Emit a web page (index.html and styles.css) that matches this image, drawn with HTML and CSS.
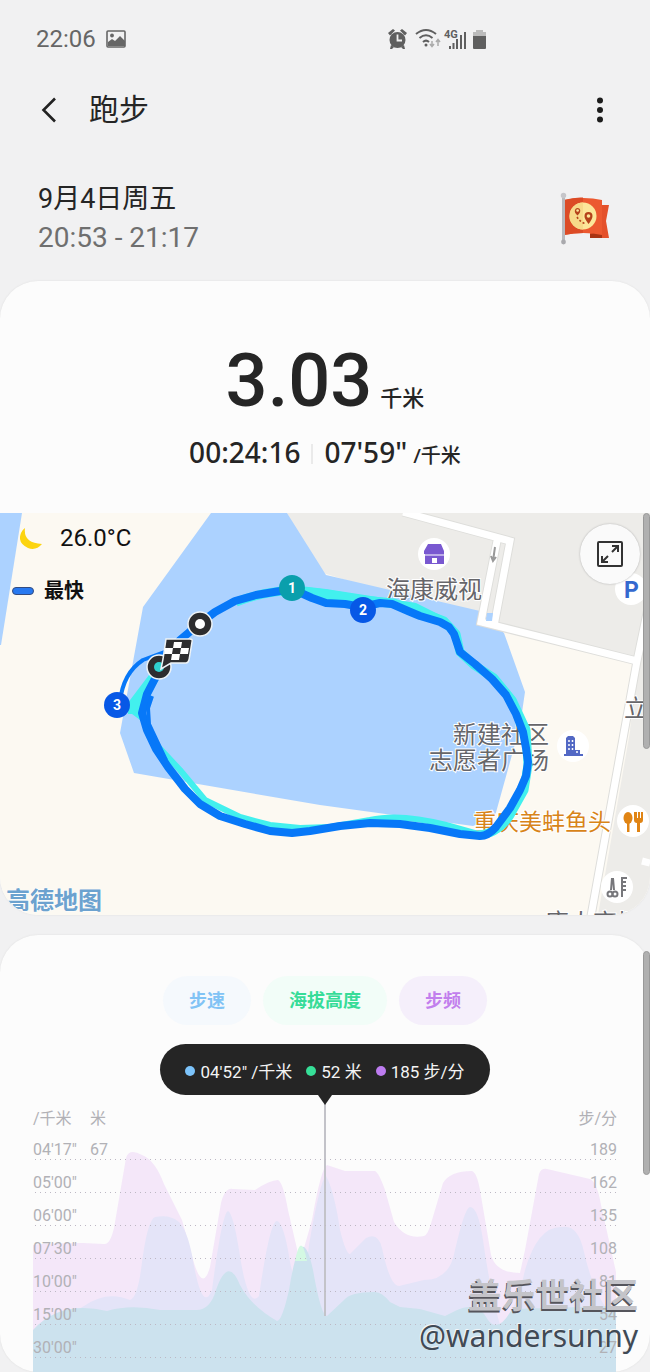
FILE: index.html
```html
<!DOCTYPE html>
<html lang="zh-CN">
<head>
<meta charset="utf-8">
<meta name="viewport" content="width=device-width, initial-scale=1">
<title>跑步</title>
<link rel="stylesheet" href="styles.css">
</head>
<body>
<div class="page">
  <div class="status">
    <div class="status-left">
      <span>22:06</span>
      <svg width="20" height="18" viewBox="0 0 20 18"><rect x="1" y="1" width="18" height="16" rx="1" fill="none" stroke="#666" stroke-width="1.6"/><circle cx="6" cy="5.500" r="1.900" fill="#666"/><path d="M2 16v-4l4-3 3 2 5-5 5 5v5z" fill="#666"/></svg>
    </div>
    <svg class="status-right" width="100" height="22" viewBox="0 0 100 22">
      <g fill="#5f5f5f"><circle cx="9.500" cy="12" r="8"/><path d="M0 5l5-4 2 1.500-5 5zM19 5l-5-4-2 1.500 5 5zM3 17l3 2-2 2H2zM16 17l-3 2 2 2h2z"/></g>
      <path d="M9.500 6.500v6h4.500" fill="none" stroke="#f1f1f1" stroke-width="1.800"/>
      <g fill="none" stroke="#5f5f5f" stroke-width="2"><path d="M28 6q10-8 20 0M31.500 10q6.500-5.500 13 0M35 14q3-2.800 6 0"/></g>
      <circle cx="38" cy="17" r="1.500" fill="#5f5f5f"/>
      <path d="M44 13v5m-2-2l2 2.500 2-2.500M50 18v-6m-2 2l2-2.500 2 2.500" fill="none" stroke="#aaa" stroke-width="1.500"/>
      <text class="status-net" x="56" y="10">4G</text>
      <path d="M62 18v3M65.500 15v6M69 11v10M73 7v14M77 4v17" stroke="#5f5f5f" stroke-width="2"/>
      <path d="M85 8V4h3V2h7v2h3v4z" fill="#bbb"/><path d="M85 8h13v12q0 1-1 1H86q-1 0-1-1z" fill="#5f5f5f"/>
    </svg>
  </div>

  <header class="bar">
    <button class="icon-btn" aria-label="返回"><svg width="16" height="26" viewBox="0 0 16 26"><path d="M14 1.500L2.500 13 14 24.500" fill="none" stroke="#222" stroke-width="2.600"/></svg></button>
    <h1>跑步</h1>
    <button class="icon-btn more" aria-label="更多选项"><svg width="8" height="26" viewBox="0 0 8 26" fill="#1c1c1c"><circle cx="4" cy="3.500" r="3"/><circle cx="4" cy="13" r="3"/><circle cx="4" cy="22.500" r="3"/></svg></button>
  </header>

  <section class="when">
    <div>
      <p class="date">9月4日周五</p>
      <p class="time">20:53 - 21:17</p>
    </div>
    <svg width="50" height="54" viewBox="0 0 50 54">
      <path d="M38 13h11l-3 16 3 17H30V38h8z" fill="#e4512b"/><path d="M30 42l12-3v7H30z" fill="#a93414"/>
      <path d="M4 8q20-4 38 0v35q-18-4-38 0z" fill="#ec5930"/><path d="M4 8q10-3 19-2.500v35.500Q14 41 4 43z" fill="#dc4b26"/>
      <circle cx="23" cy="24" r="13.500" fill="#fce69a"/><path d="M23 10.500a13.500 13.500 0 0 0 0 27z" fill="#f7d98a"/>
      <path d="M28.500 32q-4.500-6-4-8a4 4 0 0 1 8 0q0 3-4 8zM17.500 23.500q-3.500-3-2.500-5.500a2.700 2.700 0 0 1 5.200 0q.5 2.500-2.700 5.500z" fill="#b5421b"/>
      <circle cx="28.500" cy="24" r="1.800" fill="#fce69a"/><circle cx="17.600" cy="18.500" r="1.300" fill="#fce69a"/>
      <path d="M17 25q3 5 9 7" fill="none" stroke="#b5421b" stroke-width="1.500" stroke-dasharray="2 2"/>
      <path d="M3.500 3v48" stroke="#b9b9bd" stroke-width="3"/><circle cx="3.500" cy="3.500" r="2.700" fill="#c6c6ca"/><circle cx="3.500" cy="50" r="2.400" fill="#a9a9ad"/>
    </svg>
  </section>

  <section class="card">
    <div class="summary">
      <p class="distance"><span class="lcd">3.03</span><span class="unit">千米</span></p>
      <p class="pace"><span>00:24:16</span><i class="rule"></i><span>07'59"</span><span class="unit-small">/千米</span></p>
    </div>
    <div class="map">
      <svg class="map-canvas" viewBox="0 513 650 402">
        <rect y="513" width="650" height="402" fill="#fcf9f2"/>
        <path d="M0 513h22L1 645H0z" fill="#acd2ff"/>
        <path d="M287 513h363v148l-13 0-157-39-160-50z" fill="#edece9"/>
        <path d="M632 720h18v195h-52z" fill="#edece9"/>
        <path d="M650 600v130h-20l8-68z" fill="#edece9"/>
        <path d="M211 513h76l39 62 154 36 24 22 21 59-5 34-25 90-22 10-153-21-186-32-14-40 23-126z" fill="#acd2ff"/>
        <g fill="none" stroke="#dededb" stroke-width="9"><path d="M403 512l107 29-16 85M497 541l-16 81 156 39M651 594l-14 67-46 255"/></g>
        <g fill="none" stroke="#fff" stroke-width="7"><path d="M403 512l107 29-16 85M497 541l-16 81 156 39M651 594l-14 67-46 255M642 861l8 2"/></g>
        <path d="M487 613h6l-1 8h-6z" fill="#acd2ff"/>
        <path d="M495 547l-2 14m-2-5l2 5 3-4" fill="none" stroke="#999" stroke-width="2"/>
        <g fill="#fff"><circle cx="434" cy="554" r="16"/><circle cx="573" cy="746" r="16"/><circle cx="633" cy="821" r="16"/><circle cx="617" cy="887" r="16"/><circle cx="631" cy="589" r="16"/></g>
        <path d="M428 544h13l3 7v3h-20v-3zM425 554h19v10h-19z" fill="#7958d0"/><path d="M424 555h20" stroke="#fff" stroke-width="1"/><rect x="432" y="558" width="5" height="5" fill="#fff"/>
        <path d="M566 738l2-2h5l2 2v12h5v4h3v2h-19v-2h2z" fill="#5268c4"/><path d="M569 740v11M572.500 740v11M576 752h2" stroke="#fff" stroke-width="1.500" stroke-dasharray="2 2" fill="none"/>
        <g fill="#e08414"><ellipse cx="628" cy="818" rx="4.500" ry="6"/><path d="M627 820h2.500v12H627zM635 812h2v6h1v-6h2v6h1v-6h2v8q0 3-3 3v9h-3v-9q-3 0-3-3v-8z"/></g>
        <g fill="none" stroke="#77777b" stroke-width="2"><path d="M612 878l-1 12M613 878l1 12M622 897v-19h5M622 882h4M622 886h4M622 890h4"/><circle cx="610" cy="894" r="2.500"/><circle cx="615" cy="894" r="2.500"/></g>
        <text class="parking" x="624" y="598">P</text>
        <g class="poi"><text x="386" y="598">海康威视</text><text x="453" y="743">新建社区</text><text x="429" y="769">志愿者广场</text><text x="624" y="717">立</text><text x="545" y="931">唐人商场</text></g>
        <text class="poi food" x="473" y="830">重庆美蚌鱼头</text>
        <g fill="none" stroke-linejoin="round">
          <path stroke="#42f0ee" stroke-width="9" d="M236 602Q262 592 292 590L326 594 362 600 394 603 420 612 444 621 456 634 460 652 474 665 494 678 512 700 526 730 528 765 524 790 510 815Q498 834 478 835"/>
          <path stroke="#42f0ee" stroke-width="6" d="M478 834L446 825Q400 813 370 820L330 827 300 828 270 825 240 817 205 800 180 770 152 740M128 711h8l16-26 12-20"/>
          <path fill="#42f0ee" d="M300 586l26 3 90 14 28 14-40-8-42-4-50-4zM124 708l28-37 9 0-21 49z"/>
          <path stroke="#0778f8" stroke-width="8" d="M199 624L215 612 235 601 256 595 280 591 292 589 312 598 326 603 345 604 362 607 380 603 392 604 408 611 420 616 440 622 449 627 454 634 460 652 475 664 492 679 506 695 516 714 523 732 526 748 528 762 526 776 520 790 510 808 496 827Q488 836 480 836L460 834 430 828 400 824 370 823 340 826 310 831 292 833 270 831 245 824 220 816 200 804 185 789 168 767 156 749 147 730 142 713 147 694 160 669 180 640z"/>
          <path stroke="#0778f8" stroke-width="4" d="M152 696l-4 12 1 16 17 36M175 648l-32 12q-20 13-23 42"/>
        </g>
        <g stroke="#eef3f6" stroke-width="1.500"><circle cx="200" cy="624" r="12" fill="#2d2d2f"/><circle cx="159" cy="667" r="12" fill="#2d2d2f"/></g>
        <circle cx="200" cy="624" r="5" fill="#fff"/><circle cx="159" cy="667" r="5" fill="#2fd0cf"/>
        <path d="M166 639h24q3 0 2 3l-3 18q-1 3-3 3h-15l-10 6 2-10z" fill="#2d2d2f" stroke="#eef3f6" stroke-width="1.500"/>
        <path d="M174 642h8l-1 6h-8zM165 648h8l-1 6h-8zM181 648h8l-1 6h-8zM172 654h8l-1 6h-8z" fill="#fff"/>
        <circle cx="292" cy="588" r="13" fill="#0a9fac"/><circle cx="363" cy="610" r="13" fill="#0758e6"/><circle cx="117" cy="705" r="13" fill="#0758e6"/>
        <g class="lap"><text x="292" y="593">1</text><text x="363" y="615">2</text><text x="117" y="710">3</text></g>
        <text class="provider" x="6" y="909">高德地图</text>
      </svg>
      <div class="map-info">
        <p class="weather"><svg width="23" height="23" viewBox="0 0 23 23"><path d="M5 1Q3 16 22 17 16 24 8 21-3 16 1 6q1-3 4-5z" fill="#fcd410"/></svg>26.0°C</p>
        <p class="legend"><i></i>最快</p>
      </div>
      <button class="expand" aria-label="全屏"><svg width="26" height="26" viewBox="0 0 26 26" fill="none" stroke="#333" stroke-width="2"><rect x="1" y="1" width="24" height="24" rx="1"/><path d="M15 11l6-6m-6 0h6v6M11 15l-6 6m0-6v6h6"/></svg></button>
      <i class="thumb thumb-map"></i>
    </div>
  </section>

  <section class="card charts">
    <i class="thumb thumb-chart"></i>
    <div class="tabs">
      <button class="tab speed">步速</button>
      <button class="tab height">海拔高度</button>
      <button class="tab cadence">步频</button>
    </div>
    <p class="tip"><i class="dot blue"></i>04'52" /千米<i class="dot green"></i>52 米<i class="dot purple"></i>185 步/分</p>
    <div class="chart">
      <svg class="plot" viewBox="33 1095 584 277" preserveAspectRatio="none">
        <path fill="#f4e7f9" d="M33 1245Q40 1243 83 1243L104 1244Q110 1245 114 1228L126 1158Q129 1148 142 1155 155 1160 164 1184L182 1220 194 1263Q203 1292 210 1267L221 1203Q225 1187 233 1189L255 1190Q270 1180 278 1180 283 1182 288 1210L300 1262 312 1220Q321 1168 327 1165L345 1171 375 1171Q379 1173 385 1190L394 1222Q405 1240 424 1236 428 1235 432 1220L443 1183Q450 1171 472 1171 477 1173 480 1190L491 1255Q496 1273 520 1273L525 1250 539 1174Q541 1168 547 1169L590 1179Q597 1182 601 1205L616 1272V1372H33z"/>
        <path fill="#e4e4f8" d="M33 1335Q60 1320 84 1306 107 1290 130 1300 137 1298 141 1270 147 1220 155 1217 170 1214 179 1222 187 1230 192 1255 202 1315 212 1290 222 1213 228 1211 233 1213 239 1250 248 1310 259 1296 270 1220 277 1221 284 1223 290 1262 301 1315 309 1245 320 1180 326 1176 334 1190 340 1230 346 1254 350 1254L366 1238Q378 1232 382 1248 390 1286 399 1286L424 1280Q450 1280 455 1250 465 1207 470 1207 478 1207 483 1240 490 1290 500 1325 515 1315 525 1270 538 1225 563 1227 578 1225 584 1252 595 1300 616 1320V1372H33z"/>
        <path fill="#cce2ee" d="M33 1330Q60 1300 107 1311 130 1304 160 1310H195Q210 1311 216 1290 228 1255 240 1285 251 1306 277 1321 282 1321 289 1290 301 1215 313 1270 321 1316 327 1316L344 1300Q350 1292 374 1292 381 1291 390 1302L400 1307 420 1309 445 1316 455 1311Q478 1300 488 1320 498 1334 512 1309L616 1306V1372H33z"/>
        <path fill="#d4f9e3" d="M295 1261q6-31 12 0z"/>
        <path d="M325 1095v221" stroke="#c3c3c9" stroke-width="2"/>
      </svg>
      <div class="axis">
        <p class="row head"><span class="c1">/千米</span><span>米</span><span class="end">步/分</span></p>
        <p class="row"><span class="c1">04'17"</span><span>67</span><span class="end">189</span></p>
        <p class="row"><span class="c1">05'00"</span><span class="end">162</span></p>
        <p class="row"><span class="c1">06'00"</span><span class="end">135</span></p>
        <p class="row"><span class="c1">07'30"</span><span class="end">108</span></p>
        <p class="row"><span class="c1">10'00"</span><span class="end">81</span></p>
        <p class="row"><span class="c1">15'00"</span><span class="end">54</span></p>
        <p class="row"><span class="c1">30'00"</span><span class="end">27</span></p>
      </div>
    </div>
  </section>
  <div class="watermark"><p class="wm-site">盖乐世社区</p><p class="wm-user">@wandersunny</p></div>
</div>
</body>
</html>
```
FILE: styles.css
```css
* { box-sizing: border-box; }
body { margin: 0; background: #f1f1f2; color: #252525; font-family: Roboto, "Noto Sans CJK SC", sans-serif; }
p, h1 { margin: 0; font-weight: 400; }
button { border: 0; padding: 0; background: none; font: inherit; color: inherit; cursor: pointer; }
svg { display: block; }
.page { position: relative; overflow: hidden; }

.status { display: flex; align-items: center; justify-content: space-between; height: 78px; padding: 0 162px 0 36px; color: #666; font-size: 24px; }
.status-left { display: flex; align-items: center; gap: 10px; }
.status-net { font: 700 11px Roboto, sans-serif; fill: #5f5f5f; }
.bar { display: flex; align-items: center; height: 64px; padding: 0 46px 0 41px; }
.icon-btn { display: grid; place-items: center; }
.more { margin-left: auto; }
h1 { margin-left: 32px; font-size: 30px; line-height: 40px; }
.when { display: flex; align-items: center; justify-content: space-between; padding: 38px 40px 23px 38px; }
.date { font-size: 27px; line-height: 38px; }
.time { color: #6f6f6f; font-size: 28px; line-height: 40px; }

.card { position: relative; background: #fcfcfc; border-radius: 38px; box-shadow: 0 0 2px #ddd; }
.summary { height: 232px; padding-top: 60px; }
.distance { display: flex; align-items: baseline; justify-content: center; height: 91px; gap: 8px; line-height: 80px; }
.lcd { font-size: 74px; font-weight: 500; }
.unit { font-size: 22px; font-weight: 500; }
.pace { display: flex; align-items: baseline; justify-content: center; font: 500 28px/40px "Noto Sans", "Noto Sans CJK SC", sans-serif; }
.rule { align-self: center; width: 2px; height: 20px; margin: 0 11px; background: #eaeaea; }
.unit-small { margin-left: 6px; font-size: 20px; }

.map { position: relative; overflow: hidden; border-radius: 0 0 38px 38px; }
.map-canvas { width: 100%; height: auto; }
.poi { font: 24px "Noto Sans CJK SC", sans-serif; fill: #66666a; stroke: #fff; stroke-width: 2px; paint-order: stroke; }
.food { font-size: 23px; fill: #d88419; }
.parking { font: 700 23px Roboto, sans-serif; fill: #3569cf; }
.lap { font: 700 14px Roboto, sans-serif; fill: #fff; text-anchor: middle; }
.provider { font: 700 24px "Noto Sans CJK SC", sans-serif; fill: #6ca2cf; stroke: #fff; stroke-width: 1px; paint-order: stroke; }
.map-info { position: absolute; top: 8px; left: 12px; color: #111; }
.weather { display: flex; align-items: center; gap: 17px; padding-left: 8px; font-size: 24px; line-height: 34px; }
.legend { display: flex; align-items: center; gap: 10px; margin-top: 20px; font-size: 20px; font-weight: 700; line-height: 32px; }
.legend i { width: 22px; height: 8px; border: 1px solid #344c80; border-radius: 4px; background: #2879f0; }
.expand { position: absolute; top: 11px; right: 10px; display: grid; place-items: center; width: 60px; height: 60px; border-radius: 50%; background: #fafafa; box-shadow: 0 0 2px #aaa; }
.thumb { position: absolute; right: 0; width: 7px; border: 1px solid #999; border-radius: 4px; background: #b0b0b0; }
.thumb-map { top: 0; height: 236px; }
.thumb-chart { top: 16px; height: 224px; }

.charts { margin-top: 20px; padding-top: 41px; }
.tabs { display: flex; justify-content: center; gap: 12px; }
.tab { height: 49px; padding: 0 26px; border-radius: 25px; font-size: 18px; font-weight: 700; line-height: 48px; }
.speed { background: #f5f9fd; color: #81c3f5; }
.height { background: #f2fdf8; color: #37dc98; }
.cadence { background: #f5effb; color: #c27fed; }
.tip { position: relative; display: flex; align-items: center; justify-content: center; width: max-content; height: 51px; margin: 19px auto 0; padding: 2px 25px 0; border-radius: 26px; background: #252525; color: #f4f4f4; font-size: 17px; }
.tip::after { content: ""; position: absolute; top: 100%; left: calc(50% - 7px); z-index: 1; border: 7px solid transparent; border-top: 10px solid #252525; border-bottom: 0; }
.dot { width: 10px; height: 10px; margin: 0 5px 0 14px; border-radius: 50%; }
.dot:first-child { margin-left: 0; }
.blue { background: #7cc3fa; }
.green { background: #36df98; }
.purple { background: #bd7cf0; }
.chart { display: grid; margin: 0 33px; }
.chart > * { grid-area: 1 / 1; }
.plot { width: 100%; height: 277px; }
.axis { padding-top: 13px; color: #b1b1b6; font-size: 16px; }
.row { display: flex; height: 33px; padding-top: 10px; line-height: 23px; background: radial-gradient(circle, #bdb8c4 1px, transparent 1px) 0 100% / 5px 3px repeat-x; }
.head { height: 20px; padding-top: 0; line-height: 21px; background: none; }
.c1 { width: 57px; }
.end { margin-left: auto; }
.watermark { position: absolute; right: 12px; bottom: 15px; text-align: right; font-family: "Noto Sans", "Noto Sans CJK SC", sans-serif; }
.wm-site { color: #c4c4c9; font-size: 34px; font-weight: 700; line-height: 40px; text-shadow: -1px 2px 0 #55555c; }
.wm-user { color: #414a55; font-size: 30px; line-height: 42px; text-shadow: -1px -1px 0 #f4f6f8; }
```
